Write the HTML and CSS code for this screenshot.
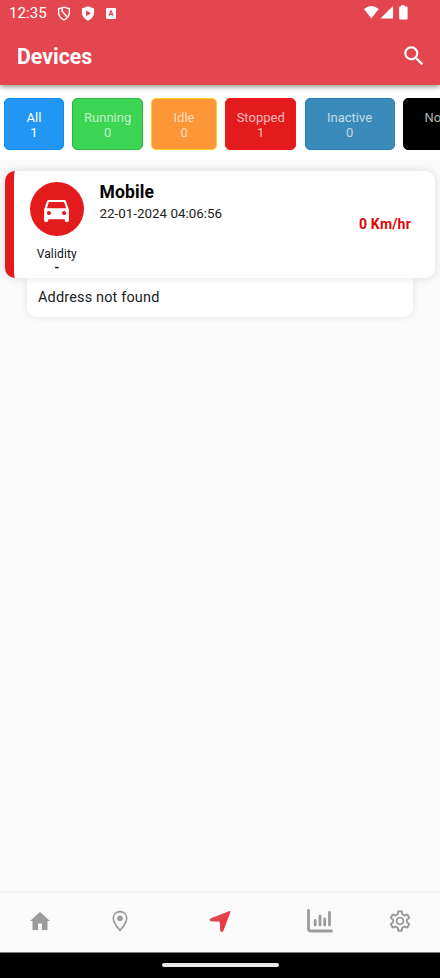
FILE: index.html
```html
<!DOCTYPE html>
<html lang="en">
<head>
<meta charset="utf-8">
<title>Devices</title>
<link rel="stylesheet" href="styles.css">
</head>
<body>
<div class="app">
  <header class="header">
    <div class="status">
      <span class="clock">12:35</span>
      <svg class="s-shield" viewBox="0 0 14 16"><path d="M7 1.200 12.700 3v4.300c0 3.400-2.500 6-5.700 7.500-3.200-1.500-5.700-4.100-5.700-7.500V3z" fill="none" stroke="#fff" stroke-width="1.500"/><path d="M5 2.200v3.300L10.200 11.500" fill="none" stroke="#fff" stroke-width="1.700"/></svg>
      <svg class="s-play" viewBox="0 0 14 16"><path d="M7 .3 13.500 2.600v4.700c0 3.700-2.800 6.700-6.500 8.300C3.300 14 .5 11 .5 7.300V2.600z" fill="#fff"/><path d="M5 4.800v6L10.200 7.800z" fill="#e3464f"/></svg>
      <svg class="s-a" viewBox="0 0 11 12"><rect width="11" height="12" rx="1" fill="#fff"/><path d="M3.200 8.500 5.500 3l2.300 5.500M4 7h3" fill="none" stroke="#e3464f" stroke-width="1.300"/></svg>
      <svg class="s-right" viewBox="0 0 48 16"><path d="M0 4.200Q7.800-2.200 15.700 4.200L7.800 14.500z" fill="#fff"/><path d="M17.500 14.500H31V1z" fill="#fff"/><path d="M39.500 1.700V.3h4v1.400h2q1 0 1 1V14.500q0 1-1 1h-7q-1 0-1-1V2.700q0-1 1-1z" fill="#fff"/></svg>
    </div>
    <div class="titlebar">
      <h1>Devices</h1>
      <svg class="search" viewBox="0 0 24 24"><path fill="#fff" d="M15.500 14h-.79l-.28-.27A6.471 6.471 0 0 0 16 9.500 6.500 6.500 0 1 0 9.500 16c1.610 0 3.090-.59 4.230-1.570l.27.28v.79l5 4.990L20.490 19l-4.990-5zm-6 0C7.010 14 5 11.990 5 9.500S7.010 5 9.500 5 14 7.010 14 9.500 11.990 14 9.500 14z"/></svg>
    </div>
  </header>
  <nav class="filters">
    <div class="chip all"><span>All</span><span>1</span></div>
    <div class="chip running"><span>Running</span><span>0</span></div>
    <div class="chip idle"><span>Idle</span><span>0</span></div>
    <div class="chip stopped"><span>Stopped</span><span>1</span></div>
    <div class="chip inactive"><span>Inactive</span><span>0</span></div>
    <div class="chip nodata"><span>No Data</span></div>
  </nav>
  <main class="list">
    <article class="card">
      <div class="vehicle">
        <div class="disc"><svg viewBox="0 0 24 24"><path fill="#fff" d="M18.920 6.010C18.720 5.420 18.160 5 17.500 5h-11c-.66 0-1.210.42-1.420 1.010L3 12v8c0 .55.45 1 1 1h1c.55 0 1-.45 1-1v-1h12v1c0 .55.45 1 1 1h1c.55 0 1-.45 1-1v-8l-2.080-5.990zM6.500 16c-.83 0-1.500-.67-1.500-1.500S5.670 13 6.500 13s1.500.67 1.500 1.500S7.330 16 6.500 16zm11 0c-.83 0-1.500-.67-1.500-1.500s.67-1.500 1.500-1.500 1.500.67 1.500 1.500-.67 1.500-1.500 1.500zM5 11l1.500-4.500h11L19 11H5z"/></svg></div>
        <span class="validity">Validity</span><span class="dash">-</span>
      </div>
      <div class="info"><h2>Mobile</h2><time>22-01-2024 04:06:56</time></div>
      <strong class="speed">0 Km/hr</strong>
    </article>
    <div class="address">Address not found</div>
  </main>
  <nav class="tabs">
    <div><svg class="t24" viewBox="0 0 24 24"><path fill="#9b9b9b" d="M10 21v-6.500h4V21h5.500v-9H22L12 3 2 12h2.500v9z"/></svg></div>
    <div><svg class="t24" viewBox="0 0 24 24"><path d="M12 2.600c-3.900 0-6.700 2.900-6.700 6.600 0 4.700 6.700 12.200 6.700 12.200s6.700-7.500 6.700-12.200c0-3.700-2.800-6.600-6.700-6.600z" fill="none" stroke="#9b9b9b" stroke-width="1.700"/><circle cx="12" cy="9.200" r="2.800" fill="#9b9b9b"/></svg></div>
    <div><svg class="t24" viewBox="0 0 24 24"><path fill="#e3464f" stroke="#e3464f" stroke-width="1.500" stroke-linejoin="round" d="M21.700 2.800 2.700 10.300v1.200l9.600.5.800 9.900h1.400z"/><path fill="#e5222b" d="m12.300 12 .8 10.500h1.400L22 3z" opacity=".3"/></svg></div>
    <div><svg class="chart" viewBox="0 0 26 24"><path d="M1.500 1.500v18q0 2.500 2.500 2.500h20.500M8.200 16v-4.500M13 16V7M17.700 16v-6M22.500 16V3.500" fill="none" stroke="#9b9b9b" stroke-width="2.800" stroke-linecap="round"/></svg></div>
    <div><svg class="t24" viewBox="0 0 24 24"><path d="M10.200 2.300h3.600l.6 3.100 2 1.100 3-1 1.800 3.200-2.300 2.100v2.400l2.300 2.100-1.800 3.200-3-1-2 1.100-.6 3.100h-3.600l-.6-3.100-2-1.100-3 1-1.800-3.200 2.300-2.100v-2.400L2.800 8.700l1.800-3.200 3 1 2-1.100z" fill="none" stroke="#9b9b9b" stroke-width="1.900" stroke-linejoin="round"/><circle cx="12" cy="12" r="3.400" fill="none" stroke="#9b9b9b" stroke-width="1.900"/></svg></div>
  </nav>
  <footer class="system"><i></i></footer>
</div>
</body>
</html>
```
FILE: styles.css
```css
* { box-sizing: border-box; }
body { margin: 0; font-family: Roboto, sans-serif; }
.app { width: 440px; height: 978px; overflow: hidden; display: flex; flex-direction: column; background: #fafafa; color: #111; }
svg { display: block; flex: none; }
h1, h2 { margin: 0; }

.header { position: relative; z-index: 1; height: 85px; flex: none; background: #e3464f; color: #fff; box-shadow: 0 2px 5px rgba(0,0,0,.4); }
.status { height: 27px; display: flex; align-items: center; padding: 0 29px 0 9px; }
.clock { font-size: 15px; line-height: 27px; width: 48px; letter-spacing: .1px; }
.s-shield, .s-play { width: 14px; height: 15px; margin-top: -1px; }
.s-play { margin-left: 10px; }
.s-a { width: 10px; height: 11px; margin-left: 11px; }
.s-right { width: 49px; height: 15px; margin: -2px 0 0 auto; }
.titlebar { height: 58px; display: flex; align-items: center; justify-content: space-between; padding: 0 13px 0 17px; }
h1 { font-size: 21.300px; font-weight: 700; line-height: 30px; padding-top: 1px; }
.search { width: 26px; height: 26px; margin-top: -1px; }

.filters { height: 75px; flex: none; display: flex; gap: 8.400px; padding: 13px 0 0 4px; background: #fff; overflow: hidden; }
.chip { height: 52px; flex: none; border: 1px solid; border-radius: 5px; color: rgba(255,255,255,.7); font-size: 13px; line-height: 15px; display: flex; flex-direction: column; align-items: center; padding-top: 11px; }
.chip span { display: block; }
.all { width: 60px; background: #2196f3; border-color: #148cf0; color: #fff; }
.running { width: 70.500px; background: #3bd453; border-color: #30b444; }
.idle { width: 65.500px; background: #fc9638; border-color: #ffd31c; }
.stopped { width: 71px; background: #e31b1c; border-color: #f41919; }
.inactive { width: 90px; background: #3a8bb9; border-color: #277fac; }
.nodata { width: 90px; background: #000; border-color: #000; }

.list { flex: 1; padding: 11px 5px 0; }
.card { position: relative; height: 107px; background: #fff; border-left: 9px solid #e31b1c; border-radius: 10px; box-shadow: 0 0 10px rgba(0,0,0,.13); display: flex; }
.vehicle { width: 85.500px; padding-top: 11px; display: flex; flex-direction: column; align-items: center; }
.disc { width: 54px; height: 54px; border-radius: 50%; background: #e31b1c; display: grid; place-items: center; }
.disc svg { width: 33px; height: 33px; }
.validity { font-size: 12px; line-height: 14px; margin-top: 11px; letter-spacing: .15px; }
.dash { font-size: 13px; font-weight: 700; line-height: 14px; }
.info { padding-top: 10px; flex: 1; }
h2 { font-size: 17.500px; line-height: 22px; font-weight: 700; letter-spacing: .15px; color: #000; }
time { display: block; font-size: 13.400px; line-height: 21px; color: #222; }
.speed { color: #df0606; font-size: 14px; line-height: 20px; letter-spacing: .2px; margin: 43px 24px 0 0; }
.address { height: 39px; margin: 0 22px; padding-left: 11px; background: #fff; border-radius: 0 0 10px 10px; box-shadow: 0 0 7px rgba(0,0,0,.1); font-size: 14.500px; line-height: 40px; letter-spacing: .15px; color: #222; }

.tabs { height: 61px; flex: none; border-top: 2px solid #f3f3f3; display: grid; grid-template-columns: 80px 80px 120px 80px 80px; }
.tabs div { display: grid; place-items: center; padding-bottom: 3px; }
.t24 { width: 24px; height: 24px; }
.chart { width: 26px; height: 24px; }
.system { height: 26px; flex: none; background: #000; display: flex; justify-content: center; padding-top: 10px; border-top: 1px solid #777; }
.system i { width: 117px; height: 4px; border-radius: 2px; background: #e8e8e8; }
```
